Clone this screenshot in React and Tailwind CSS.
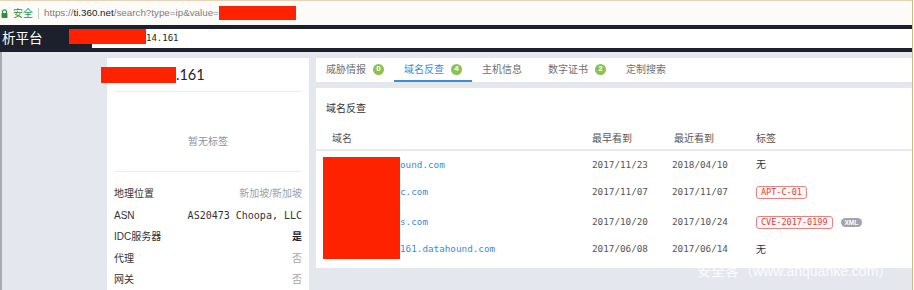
import React from 'react';

const cjk = { fontFamily: '"Liberation Sans", "Noto Sans CJK SC", sans-serif' };
const mono = { fontFamily: '"DejaVu Sans Mono", "Noto Sans CJK SC", monospace' };

const tabs = [
  { label: '威胁情报', count: 0 },
  { label: '域名反查', count: 4, active: true },
  { label: '主机信息' },
  { label: '数字证书', count: 2, extra: 'ml-[6px]' },
  { label: '定制搜索' },
];

const infoRows = [
  { label: '地理位置', value: '新加坡/新加坡', cls: 'text-[#9a9ea6]' },
  { label: 'ASN', value: 'AS20473 Choopa, LLC', cls: 'text-[#333]' },
  { label: 'IDC服务器', value: '是', cls: 'text-[#222] font-bold' },
  { label: '代理', value: '否', cls: 'text-[#a0a4ab]' },
  { label: '网关', value: '否', cls: 'text-[#a0a4ab]' },
];

const domains = [
  { tail: 'ound.com', first: '2017/11/23', last: '2018/04/10', h: 'h-[27px]', tags: null },
  { tail: 'c.com', first: '2017/11/07', last: '2017/11/07', h: 'h-[28px]', tags: ['APT-C-01'] },
  { tail: 's.com', first: '2017/10/20', last: '2017/10/24', h: 'h-[32px]', tags: ['CVE-2017-0199'], xml: true },
  { tail: '161.datahound.com', first: '2017/06/08', last: '2017/06/14', h: 'h-[22px]', tags: null },
];

function Lock() {
  return (
    <svg width="7" height="9" viewBox="0 0 7 9" className="shrink-0">
      <path d="M1.5 4V2.8a2 2 0 0 1 4 0V4" fill="none" stroke="#2f8f3e" strokeWidth="1.2" />
      <rect x="0.5" y="4" width="6" height="5" rx="0.8" fill="#2f8f3e" />
    </svg>
  );
}

function Badge({ n }) {
  return (
    <span className="ml-[7px] inline-flex h-[11px] w-[11px] items-center justify-center rounded-full bg-[#8cc152] text-[8px] font-bold leading-none text-white">
      {n}
    </span>
  );
}

export default function App() {
  return (
    <div className="relative h-[290px] w-[913px] overflow-hidden border-r border-[#d7b58e] bg-[#e5e7ef]" style={cjk}>
      {/* browser address bar */}
      <div className="flex h-[25px] items-center border-t border-[#e6d2b6] bg-[#fcfbf7] pl-[1px] text-[9.8px]">
        <Lock />
        <span className="ml-[5px] text-[10px] text-[#2f8f3e]">安全</span>
        <span className="mx-[5px] h-[11px] w-px bg-[#c9c9c9]" />
        <span className="text-[#7d7d7d]">https://</span>
        <span className="text-[#222]">ti.360.net</span>
        <span className="text-[#7d7d7d]">/search?type=ip&amp;value=</span>
        <span className="h-[14px] w-[77px] bg-[#ff2200]" />
      </div>

      {/* dark nav */}
      <div className="flex h-[27px] items-center bg-[#1b202c]">
        <span className="w-[92px] shrink-0 pl-[2px] text-[13.5px] leading-none text-white">析平台</span>
        <div className="flex h-[19px] flex-1 items-center bg-white">
          <span className="-ml-[23px] mb-[4px] h-[15px] w-[77px] bg-[#ff2200]" />
          <span className="text-[9px] text-[#222]" style={mono}>14.161</span>
        </div>
      </div>

      {/* main */}
      <div className="flex h-full border-l-2 border-[#a9abb0] pl-[105px] pt-[6px]">
        {/* left card */}
        <div className="relative w-[202px] shrink-0 self-start bg-white px-[7px] pb-[20px]">
          <div className="flex h-[34px] items-center border-b border-[#ececec]">
            <span className="-ml-[13px] h-[16px] w-[75px] bg-[#ff2200]" />
            <span className="text-[14.5px] text-[#222]" style={{ fontFamily: 'Lato, "Liberation Sans", sans-serif' }}>.161</span>
          </div>
          <div className="h-[80px] border-b border-[#ececec] pt-[43px] text-center text-[10px] leading-[14px] text-[#8f949c]">
            暂无标签
          </div>
          <div className="pt-[11px]">
            {infoRows.map((r) => (
              <div key={r.label} className="flex h-[21.5px] items-center justify-between text-[10px]">
                <span className="text-[#333]">{r.label}</span>
                <span className={r.cls} style={r.label === 'ASN' ? mono : undefined}>{r.value}</span>
              </div>
            ))}
          </div>
        </div>

        {/* right column */}
        <div className="ml-[7px] flex flex-1 flex-col self-start">
          <div className="flex h-[24px] items-stretch bg-white text-[10px]">
            {tabs.map((t) => (
              <div
                key={t.label}
                className={`flex items-center border-b-2 px-[10px] ${t.extra || ''} ${t.active ? 'border-[#3b8fd6] text-[#3b8fd6]' : 'border-transparent text-[#6b6f76]'}`}
              >
                {t.label}
                {t.count !== undefined && <Badge n={t.count} />}
              </div>
            ))}
          </div>

          <div className="relative mt-[6px] bg-white pb-[8px]">
            <div className="px-[10px] pt-[14px] text-[10px] leading-[14px] text-[#333]">域名反查</div>
            <div className="mt-[12px] grid h-[23px] grid-cols-[260px_80px_84px_1fr] items-center border-b-2 border-[#e8eaf0] pl-[16px] text-[10px] text-[#555]">
              <span>域名</span>
              <span>最早看到</span>
              <span className="pl-[2px]">最近看到</span>
              <span>标签</span>
            </div>
            {domains.map((d) => (
              <div
                key={d.first}
                className={`grid ${d.h} grid-cols-[260px_80px_84px_1fr] items-center pl-[16px] text-[9.3px] text-[#555]`}
                style={mono}
              >
                <span className="pl-[68px] text-[#3d8ccf]">{d.tail}</span>
                <span>{d.first}</span>
                <span>{d.last}</span>
                <span className="flex items-center">
                  {d.tags ? (
                    d.tags.map((tag) => (
                      <span key={tag} className="rounded-[3px] border border-[#e08583] bg-[#fdf4f4] px-[4px] text-[8.5px] leading-[11px] text-[#d9453f]">
                        {tag}
                      </span>
                    ))
                  ) : (
                    <span className="text-[10px] text-[#333]" style={cjk}>无</span>
                  )}
                  {d.xml && (
                    <span className="ml-[8px] rounded-full bg-[#a2a4a8] px-[4px] text-[6.5px] font-bold leading-[9px] text-white" style={cjk}>
                      XML
                    </span>
                  )}
                </span>
              </div>
            ))}
            {/* redaction over domain names */}
            <div className="absolute left-[7px] top-[69px] h-[102px] w-[77px] bg-[#ff2200]" />
          </div>
        </div>
      </div>

      {/* watermark */}
      <div className="absolute left-[697px] top-[262px] text-[14px] leading-[18px] text-white/80">
        安全客（www.anquanke.com）
      </div>
    </div>
  );
}
